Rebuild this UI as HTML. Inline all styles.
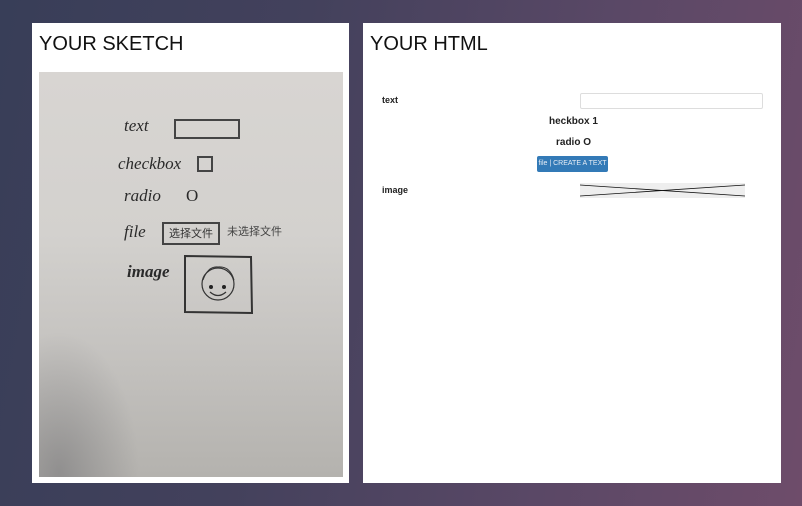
<!DOCTYPE html>
<html><head><meta charset="utf-8"><style>
html,body{margin:0;padding:0;}
body{width:802px;height:506px;overflow:hidden;position:relative;
background:linear-gradient(100deg,#383e58 0%,#43415c 35%,#5a4866 70%,#6e4c6a 100%);
font-family:"Liberation Sans",Arial,sans-serif;}
.panel{position:absolute;background:#fff;top:23px;height:460px;}
.h{position:absolute;top:10px;left:7px;font-size:20px;color:#111;}
.photo{position:absolute;left:7px;top:49px;width:304px;height:405px;
background:
radial-gradient(ellipse 80px 140px at 20px 400px,rgba(90,90,95,.4),rgba(90,90,95,0)),
linear-gradient(180deg,#d8d5d2 0%,#d3d1ce 40%,#c4c2bf 70%,#b4b2ae 100%);overflow:hidden;}
.hw{position:absolute;font-family:"Liberation Serif",serif;font-style:italic;font-size:17px;color:#2a2a2a;}
.lbl{position:absolute;font-size:10px;font-weight:bold;color:#222;}
</style></head><body>
<div class="panel" style="left:32px;width:317px;">
<div class="h">YOUR SKETCH</div>
<div class="photo">
<div class="hw" style="left:85px;top:44px;">text</div>
<div style="position:absolute;left:135px;top:47px;width:62px;height:16px;border:2px solid #444;"></div>
<div class="hw" style="left:79px;top:82px;">checkbox</div>
<div style="position:absolute;left:158px;top:84px;width:12px;height:12px;border:2px solid #444;"></div>
<div class="hw" style="left:85px;top:114px;">radio</div>
<div class="hw" style="left:147px;top:114px;font-style:normal;">O</div>
<div class="hw" style="left:85px;top:150px;">file</div>
<div style="position:absolute;left:123px;top:150px;width:54px;height:19px;border:2px solid #444;font-family:'Noto Sans CJK SC',sans-serif;font-size:11px;color:#333;line-height:19px;text-align:center;">选择文件</div>
<div style="position:absolute;left:188px;top:151px;font-family:'Noto Sans CJK SC',sans-serif;font-size:11px;color:#444;">未选择文件</div>
<div class="hw" style="left:88px;top:190px;font-weight:bold;">image</div>
<svg style="position:absolute;left:144px;top:182px" width="70" height="62">
<path d="M2 2 L68 3 L69 59 L2 58 Z" fill="none" stroke="#333" stroke-width="2"/>
<circle cx="35" cy="30" r="16" fill="none" stroke="#333" stroke-width="1.2"/>
<path d="M20 26 Q25 12 35 13 Q47 12 51 26" fill="none" stroke="#333" stroke-width="1"/>
<circle cx="28" cy="33" r="2" fill="#222"/><circle cx="41" cy="33" r="2" fill="#222"/>
<path d="M27 38 Q35 45 43 38" fill="none" stroke="#333" stroke-width="1.2"/>
</svg>
</div>
</div>
<div class="panel" style="left:363px;width:418px;">
<div class="h">YOUR HTML</div>
<div class="lbl" style="left:19px;top:72px;font-size:9px;">text</div>
<div style="position:absolute;left:217px;top:70px;width:181px;height:14px;border:1px solid #ddd;border-radius:2px;"></div>
<div class="lbl" style="left:186px;top:93px;">heckbox 1</div>
<div class="lbl" style="left:193px;top:114px;">radio O</div>
<div style="position:absolute;left:174px;top:133px;width:71px;height:16px;background:#337ab7;border-radius:2px;color:#e8eef6;font-size:7px;line-height:16px;text-align:center;">file | CREATE A TEXT</div>
<div class="lbl" style="left:19px;top:162px;font-size:9px;">image</div>
<svg style="position:absolute;left:217px;top:160px" width="165" height="15">
<rect width="165" height="15" fill="#eee"/>
<path d="M0 2 L165 13 M0 13 L165 2" stroke="#111" stroke-width="0.8"/>
</svg>
</div>
</body></html>
